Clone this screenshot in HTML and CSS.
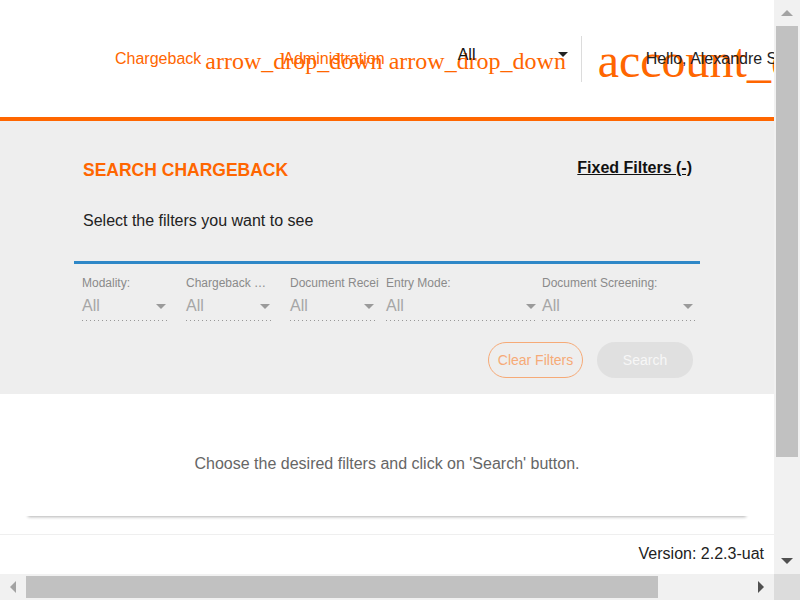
FILE: index.html
```html
<!DOCTYPE html>
<html lang="en">
<head>
<meta charset="utf-8">
<title>Chargeback</title>
<link rel="stylesheet" href="styles.css">
</head>
<body>
<div class="window">
  <div class="viewport">
    <header class="topbar">
      <nav class="nav">
        <div class="nav-item first"><span class="nav-label">Chargeback</span><span class="icon-text nav-icon">arrow_drop_down</span></div>
        <div class="nav-item"><span class="nav-label">Administration</span><span class="icon-text nav-icon">arrow_drop_down</span></div>
      </nav>
      <div class="lang"><span class="lang-value">All</span><span class="caret caret-dark"></span></div>
      <div class="divider"></div>
      <div class="user"><span class="icon-text user-icon">account_circle</span><span class="user-name">Hello, Alexandre Silva</span></div>
    </header>

    <section class="search">
      <div class="search-inner">
        <div class="search-head">
          <h1 class="search-title">SEARCH CHARGEBACK</h1>
          <a class="fixed-link">Fixed Filters (-)</a>
        </div>
        <p class="search-hint">Select the filters you want to see</p>
        <div class="blue-rule"></div>
        <div class="filters">
          <div class="field f1">
            <div class="field-label">Modality:</div>
            <div class="field-select"><span>All</span><span class="caret caret-light"></span></div>
            <div class="field-line"></div>
          </div>
          <div class="field f2">
            <div class="field-label ellipsis">Chargeback Reason:</div>
            <div class="field-select"><span>All</span><span class="caret caret-light"></span></div>
            <div class="field-line"></div>
          </div>
          <div class="field f3">
            <div class="field-label clip">Document Received:</div>
            <div class="field-select"><span>All</span><span class="caret caret-light"></span></div>
            <div class="field-line"></div>
          </div>
          <div class="field f4">
            <div class="field-label">Entry Mode:</div>
            <div class="field-select"><span>All</span><span class="caret caret-light"></span></div>
            <div class="field-line"></div>
          </div>
          <div class="field f5">
            <div class="field-label">Document Screening:</div>
            <div class="field-select"><span>All</span><span class="caret caret-light"></span></div>
            <div class="field-line"></div>
          </div>
        </div>
        <div class="actions">
          <button class="btn btn-outline" type="button">Clear Filters</button>
          <button class="btn btn-disabled" type="button">Search</button>
        </div>
      </div>
    </section>

    <main class="results">
      <div class="card">
        <p class="empty-msg">Choose the desired filters and click on 'Search' button.</p>
      </div>
    </main>

    <footer class="footer">
      <span class="version">Version: 2.2.3-uat</span>
    </footer>
  </div>

  <div class="vscroll">
    <div class="sb-btn"><svg width="12" height="6" viewBox="0 0 12 6"><polygon points="0,6 6,0 12,6" fill="#a3a3a3"/></svg></div>
    <div class="vtrack"><div class="vthumb"></div></div>
    <div class="sb-btn"><svg width="12" height="6" viewBox="0 0 12 6"><polygon points="0,0 12,0 6,6" fill="#505050"/></svg></div>
  </div>

  <div class="hscroll">
    <div class="sb-btn"><svg width="6" height="12" viewBox="0 0 6 12"><polygon points="6,0 6,12 0,6" fill="#a3a3a3"/></svg></div>
    <div class="htrack"><div class="hthumb"></div></div>
    <div class="sb-btn"><svg width="6" height="12" viewBox="0 0 6 12"><polygon points="0,0 6,6 0,12" fill="#505050"/></svg></div>
  </div>

  <div class="corner"></div>
</div>
</body>
</html>
```

FILE: styles.css
```css
* { box-sizing: border-box; }

html, body {
  margin: 0;
  padding: 0;
  width: 800px;
  height: 600px;
  overflow: hidden;
  font-family: "Liberation Sans", Arial, sans-serif;
  color: #222;
}

.window {
  display: grid;
  grid-template-columns: 774px 26px;
  grid-template-rows: 574px 26px;
  width: 800px;
  height: 600px;
}

.viewport {
  grid-column: 1;
  grid-row: 1;
  overflow: hidden;
  display: flex;
  flex-direction: column;
  background: #fff;
  min-width: 0;
}

/* ---------- header ---------- */
.topbar {
  flex: none;
  display: flex;
  align-items: center;
  height: 121px;
  border-bottom: 4px solid #ff6600;
  padding-left: 115px;
  white-space: nowrap;
  background: #fff;
}

.topbar > * { flex: none; }

.nav { display: flex; align-items: center; flex: none; }

.nav-item {
  display: flex;
  align-items: center;
  flex: none;
}

.nav-item.first { margin-right: 11px; }

.nav-label {
  font-size: 16px;
  color: #ff6600;
  flex: none;
}

.icon-text {
  font-family: "Liberation Serif", "Times New Roman", serif;
  color: #ff6600;
  white-space: nowrap;
  display: block;
  flex: none;
  overflow: visible;
}

.nav-icon {
  font-size: 24px;
  width: 67px;
  margin-left: 4px;
  margin-top: 5px;
}

.lang {
  display: flex;
  align-items: center;
  justify-content: space-between;
  width: 112px;
  padding-left: 2px;
  padding-bottom: 7px;
  font-size: 16px;
  color: #111;
}

.caret {
  display: block;
  width: 0;
  height: 0;
  border-left: 5px solid transparent;
  border-right: 5px solid transparent;
  border-top: 5px solid #333;
}

.caret-dark { border-top-color: #222; margin-top: -2px; }
.caret-light { border-top-color: #9a9a9a; }

.divider {
  width: 1px;
  height: 46px;
  background: #dcdcdc;
  margin-left: 13px;
}

.user {
  display: flex;
  align-items: center;
  padding-left: 16px;
}

.user-icon {
  font-size: 48px;
  width: 48px;
  margin-top: 3px;
}

.user-name {
  font-size: 16px;
  color: #222;
  flex: none;
}

/* ---------- search panel ---------- */
.search {
  flex: none;
  background: #eeeeee;
  padding: 36px 0 16px;
}

.search-inner {
  width: 626px;
  margin: 0 auto;
}

.search-head {
  display: flex;
  justify-content: space-between;
  align-items: flex-start;
  padding: 0 8px 0 9px;
}

.search-title {
  margin: 3px 0 0;
  font-size: 17.5px;
  font-weight: 700;
  color: #ff6600;
  line-height: normal;
}

.fixed-link {
  margin-top: 2px;
  font-size: 16px;
  font-weight: 700;
  color: #111;
  text-decoration: underline;
  line-height: normal;
}

.search-hint {
  margin: 31px 0 0;
  padding-left: 9px;
  font-size: 16px;
  color: #222;
  line-height: normal;
}

.blue-rule {
  height: 3px;
  background: #2e87c7;
  margin-top: 31px;
}

.filters {
  display: flex;
  padding-left: 8px;
  margin-top: 12px;
}

.field { flex: none; }
.f1 { width: 86px; margin-right: 18px; }
.f2 { width: 86px; margin-right: 18px; }
.f3 { width: 86px; margin-right: 10px; }
.f4 { width: 152px; margin-right: 4px; }
.f5 { width: 153px; }

.field-label {
  font-size: 12px;
  line-height: normal;
  color: #8a8a8a;
  white-space: nowrap;
  overflow: hidden;
  margin-bottom: 7px;
}

.field-label.ellipsis { text-overflow: ellipsis; }
.field-label.clip { margin-right: -3px; text-overflow: clip; }

.field-select {
  display: flex;
  align-items: center;
  justify-content: space-between;
  font-size: 16px;
  line-height: normal;
  color: #a6a6a6;
  padding-right: 2px;
  padding-bottom: 5px;
}

.field-line {
  height: 1px;
  background-image: linear-gradient(to right, rgba(0,0,0,0.36) 0, rgba(0,0,0,0.36) 33%, transparent 33%);
  background-size: 4px 1px;
  background-repeat: repeat-x;
}

.actions {
  display: flex;
  justify-content: flex-end;
  gap: 14px;
  margin-top: 21px;
  padding-right: 7px;
}

.btn {
  height: 36px;
  border-radius: 18px;
  font-family: "Liberation Sans", Arial, sans-serif;
  font-size: 14px;
  padding: 0;
  cursor: default;
}

.btn-outline {
  width: 95px;
  background: transparent;
  border: 1px solid #f6aa77;
  color: #f6aa77;
}

.btn-disabled {
  width: 96px;
  background: #e0e0e0;
  border: none;
  color: #f7f7f7;
}

/* ---------- results ---------- */
.results {
  flex: 1;
  padding: 0 25px;
  background: #fff;
  min-height: 0;
}

.card {
  height: 122px;
  padding-top: 61px;
  background: #fff;
  box-shadow: 0 4px 3px -3px rgba(0,0,0,0.3);
}

.empty-msg {
  margin: 0;
  text-align: center;
  font-size: 16px;
  line-height: normal;
  color: #666;
}

/* ---------- footer ---------- */
.footer {
  flex: none;
  height: 40px;
  border-top: 1px solid #efefef;
  display: flex;
  justify-content: flex-end;
  align-items: center;
  padding: 0 10px 1px 0;
  background: #fff;
}

.version {
  font-size: 16px;
  color: #222;
}

/* ---------- scrollbars ---------- */
.vscroll {
  grid-column: 2;
  grid-row: 1;
  background: #f1f1f1;
  display: flex;
  flex-direction: column;
}

.sb-btn {
  flex: none;
  width: 26px;
  height: 26px;
  display: flex;
  align-items: center;
  justify-content: center;
}

.vtrack { flex: 1; }

.vthumb {
  height: 431px;
  margin: 0 2px;
  background: #c1c1c1;
}

.hscroll {
  grid-column: 1;
  grid-row: 2;
  background: #f1f1f1;
  display: flex;
}

.htrack { flex: 1; padding: 2px 0; }

.hthumb {
  width: 632px;
  height: 22px;
  background: #c1c1c1;
}

.corner {
  grid-column: 2;
  grid-row: 2;
  background: #dcdcdc;
}
```
